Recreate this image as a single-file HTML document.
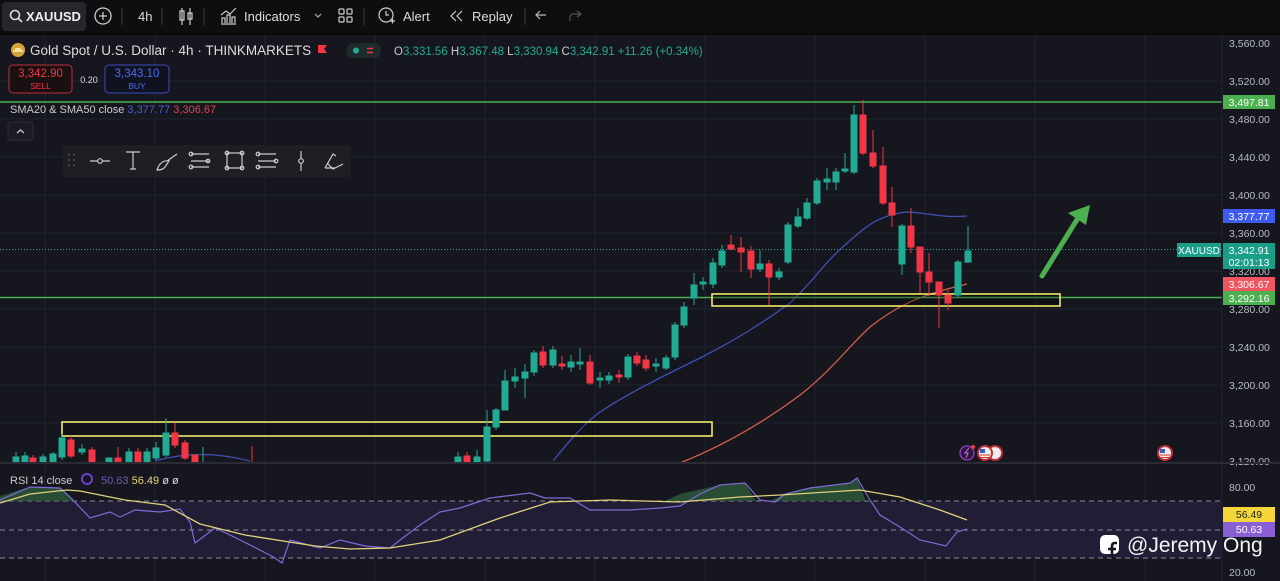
<!DOCTYPE html>
<html><head><meta charset="utf-8">
<style>
html,body{margin:0;padding:0;background:#14151c;width:1280px;height:581px;overflow:hidden;font-family:"Liberation Sans",sans-serif}
svg{display:block}
text{font-family:"Liberation Sans",sans-serif}
</style></head><body>
<svg width="1280" height="581" viewBox="0 0 1280 581" xmlns="http://www.w3.org/2000/svg">
<defs>
<clipPath id="mc"><rect x="0" y="34" width="1222" height="428"/></clipPath>
</defs>
<rect width="1280" height="581" fill="#15161e"/>
<!-- grid -->
<g stroke="#1f2130" stroke-width="1">
<line x1="0" y1="81" x2="1222" y2="81"/><line x1="0" y1="119" x2="1222" y2="119"/><line x1="0" y1="157" x2="1222" y2="157"/><line x1="0" y1="195" x2="1222" y2="195"/><line x1="0" y1="233" x2="1222" y2="233"/><line x1="0" y1="271" x2="1222" y2="271"/><line x1="0" y1="309" x2="1222" y2="309"/><line x1="0" y1="347" x2="1222" y2="347"/><line x1="0" y1="385" x2="1222" y2="385"/><line x1="0" y1="423" x2="1222" y2="423"/>
<line x1="45" y1="34" x2="45" y2="581"/><line x1="155" y1="34" x2="155" y2="581"/><line x1="265" y1="34" x2="265" y2="581"/><line x1="375" y1="34" x2="375" y2="581"/><line x1="485" y1="34" x2="485" y2="581"/><line x1="595" y1="34" x2="595" y2="581"/><line x1="705" y1="34" x2="705" y2="581"/><line x1="815" y1="34" x2="815" y2="581"/><line x1="925" y1="34" x2="925" y2="581"/><line x1="1035" y1="34" x2="1035" y2="581"/><line x1="1145" y1="34" x2="1145" y2="581"/>
</g>
<!-- top bar -->
<rect x="0" y="0" width="1280" height="33" fill="#0e0e10"/>
<rect x="2" y="2" width="84" height="29" rx="4" fill="#26272b"/>
<circle cx="15" cy="15" r="4.5" fill="none" stroke="#ddd" stroke-width="1.6"/><line x1="18" y1="18" x2="22" y2="22" stroke="#ddd" stroke-width="1.6"/>
<text x="26" y="21" fill="#eee" font-size="13" font-weight="bold">XAUUSD</text>
<circle cx="103" cy="16" r="8" fill="none" stroke="#ccc" stroke-width="1.3"/><path d="M99 16h8M103 12v8" stroke="#ccc" stroke-width="1.3"/>
<g stroke="#3a3a3e"><line x1="122" y1="8" x2="122" y2="25"/><line x1="162" y1="8" x2="162" y2="25"/><line x1="204" y1="8" x2="204" y2="25"/><line x1="364" y1="8" x2="364" y2="25"/><line x1="525" y1="8" x2="525" y2="25"/></g>
<text x="138" y="21" fill="#ddd" font-size="13">4h</text>
<path d="M182 8v17M180 11h4v9h-4zM190 8v17M188 13h4v6h-4z" stroke="#ccc" fill="none" stroke-width="1.2"/>
<path d="M221 24h15M222 23v-5h3v5M227 23v-8h3v8M232 23v-6h3v6M221 15l5-4 4 3 6-6" stroke="#ccc" fill="none" stroke-width="1.2"/>
<text x="244" y="21" fill="#ddd" font-size="13">Indicators</text>
<path d="M315 14l3 3 3-3" stroke="#aaa" fill="none" stroke-width="1.2"/>
<g fill="none" stroke="#ccc" stroke-width="1.2"><rect x="339" y="9" width="5" height="5" rx="1"/><rect x="347" y="9" width="5" height="5" rx="1"/><rect x="339" y="17" width="5" height="5" rx="1"/><rect x="347" y="17" width="5" height="5" rx="1"/></g>
<circle cx="386" cy="15" r="7" fill="none" stroke="#ccc" stroke-width="1.2"/><path d="M386 11v4h3M390 21h5M392.5 18.5v5" stroke="#ccc" fill="none" stroke-width="1.2"/>
<text x="403" y="21" fill="#ddd" font-size="13">Alert</text>
<path d="M456 11l-5 5 5 5M462 11l-5 5 5 5" stroke="#ccc" fill="none" stroke-width="1.2"/>
<text x="472" y="21" fill="#ddd" font-size="13">Replay</text>
<path d="M546 15h-9M540 11l-4 4 4 4" stroke="#bbb" fill="none" stroke-width="1.2"/>
<path d="M570 21v-4a3 3 0 013-3h7M577 11l4 3-4 3" stroke="#555" fill="none" stroke-width="1.2"/>
<rect x="0" y="33" width="1280" height="2" fill="#0a0a0c"/>

<!-- legend -->
<circle cx="18" cy="50" r="7" fill="#d6a33b"/><path d="M13 51h10M15 49h6" stroke="#fff3c0" stroke-width="1.5"/>
<text x="30" y="55" fill="#ddd" font-size="13.5">Gold Spot / U.S. Dollar · 4h · THINKMARKETS</text>
<path d="M318 45h9l-3 4 3 4h-9z" fill="#f23645"/>
<rect x="346" y="43" width="35" height="15" rx="7" fill="#1f2a2a"/><circle cx="356" cy="50.5" r="3" fill="#22ab94"/><path d="M367 48.5h6M367 52.5h6" stroke="#f23645" stroke-width="1.5"/>
<text x="394" y="55" font-size="11.5" fill="#ccc">O<tspan fill="#22ab94">3,331.56</tspan> H<tspan fill="#22ab94">3,367.48</tspan> L<tspan fill="#22ab94">3,330.94</tspan> C<tspan fill="#22ab94">3,342.91 +11.26 (+0.34%)</tspan></text>
<rect x="9" y="65" width="63" height="28" rx="4" fill="#1a1012" stroke="#c0303a"/>
<text x="40.5" y="77" fill="#f23645" font-size="11.5" text-anchor="middle">3,342.90</text><text x="40.5" y="89" fill="#f23645" font-size="8.5" text-anchor="middle">SELL</text>
<text x="89" y="83" fill="#ddd" font-size="9" text-anchor="middle">0.20</text>
<rect x="105" y="65" width="64" height="28" rx="4" fill="#10121f" stroke="#3a4bc0"/>
<text x="137" y="77" fill="#4a6cf7" font-size="11.5" text-anchor="middle">3,343.10</text><text x="137" y="89" fill="#4a6cf7" font-size="8.5" text-anchor="middle">BUY</text>
<text x="10" y="113" font-size="11" fill="#ccc">SMA20 &amp; SMA50 close <tspan fill="#4a5fd0">3,377.77</tspan> <tspan fill="#e0444f">3,306.67</tspan></text>
<rect x="8" y="122" width="25" height="18" rx="2" fill="#1a1b24" stroke="#2c2e3a"/><path d="M17 133l3.5-3 3.5 3" stroke="#ccc" fill="none" stroke-width="1.3"/>

<!-- SMAs + chart -->
<g clip-path="url(#mc)">
<path d="M155 461 Q200 448 250 461" stroke="#3f51b5" fill="none" stroke-width="1.3"/>
<path d="M553 461 C570 440 585 423 600 412 C630 392 660 378 700 358 C730 343 760 325 790 303 C810 285 825 262 845 245 C860 232 875 215 907 212 C930 213 940 218 967 216" stroke="#3f51b5" fill="none" stroke-width="1.3"/>
<path d="M680 463 C720 447 760 425 800 395 C830 372 850 345 870 327 C900 303 925 294 967 284" stroke="#d9604a" fill="none" stroke-width="1.2"/>
<line x1="0" y1="102" x2="1222" y2="102" stroke="#4caf50" stroke-width="1.5"/>
<line x1="0" y1="297.5" x2="1222" y2="297.5" stroke="#4caf50" stroke-width="1.5"/>
<line x1="0" y1="249.5" x2="1222" y2="249.5" stroke="#22ab94" stroke-width="1" stroke-dasharray="1 2"/>
<rect x="62" y="422" width="650" height="14" fill="rgba(0,0,0,0.2)" stroke="#f0ea6a" stroke-width="1.6"/>
<rect x="712" y="294" width="348" height="12" fill="rgba(0,0,0,0.25)" stroke="#f0ea6a" stroke-width="1.6"/>
<g stroke-width="1">
<!-- left cluster -->
<g stroke="#22ab94" fill="#22ab94">
<line x1="16" y1="452" x2="16" y2="462"/><rect x="13" y="457" width="6" height="5"/>
<line x1="25" y1="452" x2="25" y2="462"/><rect x="22" y="456" width="6" height="6"/>
<line x1="43" y1="454" x2="43" y2="462"/><rect x="40" y="457" width="6" height="5"/>
<line x1="53" y1="452" x2="53" y2="462"/><rect x="50" y="454" width="6" height="8"/>
<line x1="62" y1="434" x2="62" y2="460"/><rect x="59" y="438" width="6" height="19"/>
<line x1="82" y1="444" x2="82" y2="455"/><rect x="79" y="449" width="6" height="3"/>
<rect x="106" y="458" width="6" height="4"/>
<line x1="129" y1="448" x2="129" y2="462"/><rect x="126" y="452" width="6" height="10"/>
<line x1="147" y1="448" x2="147" y2="462"/><rect x="144" y="452" width="6" height="10"/>
<line x1="156" y1="442" x2="156" y2="460"/><rect x="153" y="448" width="6" height="10"/>
<line x1="166" y1="418" x2="166" y2="457"/><rect x="163" y="433" width="6" height="22"/>
<line x1="203" y1="447" x2="203" y2="462"/>
</g>
<g stroke="#f23645" fill="#f23645">
<line x1="33" y1="455" x2="33" y2="462"/><rect x="30" y="458" width="6" height="4"/>
<line x1="71" y1="436" x2="71" y2="458"/><rect x="68" y="440" width="6" height="16"/>
<line x1="92" y1="447" x2="92" y2="462"/><rect x="89" y="450" width="6" height="12"/>
<line x1="118" y1="447" x2="118" y2="462"/><rect x="115" y="458" width="6" height="4"/>
<line x1="138" y1="448" x2="138" y2="462"/><rect x="135" y="452" width="6" height="10"/>
<line x1="175" y1="423" x2="175" y2="448"/><rect x="172" y="433" width="6" height="12"/>
<line x1="185" y1="440" x2="185" y2="460"/><rect x="182" y="443" width="6" height="15"/>
<rect x="192" y="455" width="6" height="7"/>
<line x1="252" y1="446" x2="252" y2="462"/>
</g>
<!-- middle -->
<g stroke="#22ab94" fill="#22ab94">
<line x1="458" y1="452" x2="458" y2="462"/><rect x="455" y="457" width="6" height="5"/>
<line x1="477" y1="450" x2="477" y2="462"/><rect x="474" y="457" width="6" height="5"/>
<line x1="487" y1="410" x2="487" y2="462"/><rect x="484" y="427" width="6" height="34"/>
<line x1="496" y1="408" x2="496" y2="430"/><rect x="493" y="410" width="6" height="17"/>
<line x1="505" y1="370" x2="505" y2="410"/><rect x="502" y="381" width="6" height="29"/>
<line x1="515" y1="368" x2="515" y2="388"/><rect x="512" y="377" width="6" height="4"/>
<line x1="525" y1="364" x2="525" y2="398"/><rect x="522" y="372" width="6" height="6"/>
<line x1="534" y1="350" x2="534" y2="376"/><rect x="531" y="353" width="6" height="19"/>
<line x1="553" y1="346" x2="553" y2="368"/><rect x="550" y="350" width="6" height="15"/>
<line x1="571" y1="355" x2="571" y2="372"/><rect x="568" y="362" width="6" height="5"/>
<line x1="580" y1="348" x2="580" y2="370"/><rect x="577" y="362" width="6" height="2"/>
<line x1="600" y1="372" x2="600" y2="388"/><rect x="597" y="378" width="6" height="2"/>
<line x1="609" y1="372" x2="609" y2="384"/><rect x="606" y="376" width="6" height="4"/>
<line x1="628" y1="354" x2="628" y2="380"/><rect x="625" y="357" width="6" height="20"/>
<line x1="656" y1="358" x2="656" y2="372"/><rect x="653" y="364" width="6" height="2"/>
<line x1="666" y1="355" x2="666" y2="370"/><rect x="663" y="358" width="6" height="10"/>
<line x1="675" y1="322" x2="675" y2="360"/><rect x="672" y="325" width="6" height="32"/>
<line x1="684" y1="302" x2="684" y2="328"/><rect x="681" y="307" width="6" height="18"/>
<line x1="694" y1="273" x2="694" y2="305"/><rect x="691" y="285" width="6" height="13"/>
<line x1="703" y1="277" x2="703" y2="290"/><rect x="700" y="282" width="6" height="2"/>
<line x1="713" y1="258" x2="713" y2="288"/><rect x="710" y="263" width="6" height="21"/>
<line x1="722" y1="245" x2="722" y2="268"/><rect x="719" y="251" width="6" height="14"/>
<line x1="760" y1="250" x2="760" y2="272"/><rect x="757" y="264" width="6" height="5"/>
<line x1="779" y1="268" x2="779" y2="280"/><rect x="776" y="272" width="6" height="5"/>
<line x1="788" y1="222" x2="788" y2="264"/><rect x="785" y="225" width="6" height="37"/>
<line x1="798" y1="208" x2="798" y2="228"/><rect x="795" y="217" width="6" height="9"/>
<line x1="807" y1="198" x2="807" y2="220"/><rect x="804" y="203" width="6" height="15"/>
<line x1="817" y1="178" x2="817" y2="205"/><rect x="814" y="181" width="6" height="22"/>
<line x1="827" y1="168" x2="827" y2="190"/><rect x="824" y="179" width="6" height="3"/>
<line x1="836" y1="168" x2="836" y2="190"/><rect x="833" y="172" width="6" height="10"/>
<line x1="845" y1="153" x2="845" y2="173"/><rect x="842" y="169" width="6" height="2"/>
<line x1="854" y1="105" x2="854" y2="174"/><rect x="851" y="115" width="6" height="57"/>
<line x1="902" y1="224" x2="902" y2="275"/><rect x="899" y="226" width="6" height="38"/>
<line x1="958" y1="260" x2="958" y2="297"/><rect x="955" y="262" width="6" height="33"/>
<line x1="968" y1="226" x2="968" y2="263"/><rect x="965" y="251" width="6" height="11"/>
</g>
<g stroke="#f23645" fill="#f23645">
<line x1="467" y1="452" x2="467" y2="462"/><rect x="464" y="456" width="6" height="6"/>
<line x1="543" y1="346" x2="543" y2="368"/><rect x="540" y="352" width="6" height="13"/>
<line x1="562" y1="356" x2="562" y2="370"/><rect x="559" y="364" width="6" height="2"/>
<line x1="590" y1="355" x2="590" y2="385"/><rect x="587" y="362" width="6" height="21"/>
<line x1="619" y1="370" x2="619" y2="383"/><rect x="616" y="375" width="6" height="2"/>
<line x1="637" y1="352" x2="637" y2="366"/><rect x="634" y="356" width="6" height="7"/>
<line x1="646" y1="355" x2="646" y2="371"/><rect x="643" y="360" width="6" height="8"/>
<line x1="731" y1="235" x2="731" y2="250"/><rect x="728" y="245" width="6" height="4"/>
<line x1="741" y1="237" x2="741" y2="272"/><rect x="738" y="248" width="6" height="4"/>
<line x1="751" y1="246" x2="751" y2="278"/><rect x="748" y="251" width="6" height="18"/>
<line x1="769" y1="260" x2="769" y2="305"/><rect x="766" y="264" width="6" height="13"/>
<line x1="863" y1="100" x2="863" y2="155"/><rect x="860" y="115" width="6" height="38"/>
<line x1="873" y1="130" x2="873" y2="168"/><rect x="870" y="153" width="6" height="13"/>
<line x1="883" y1="147" x2="883" y2="205"/><rect x="880" y="166" width="6" height="37"/>
<line x1="892" y1="187" x2="892" y2="227"/><rect x="889" y="203" width="6" height="12"/>
<line x1="911" y1="208" x2="911" y2="253"/><rect x="908" y="226" width="6" height="21"/>
<line x1="920" y1="247" x2="920" y2="293"/><rect x="917" y="247" width="6" height="25"/>
<line x1="929" y1="253" x2="929" y2="296"/><rect x="926" y="272" width="6" height="10"/>
<line x1="939" y1="282" x2="939" y2="328"/><rect x="936" y="282" width="6" height="13"/>
<line x1="948" y1="290" x2="948" y2="310"/><rect x="945" y="295" width="6" height="8"/>
</g>
</g>
<!-- arrow -->
<path d="M1042 276 L1078 218" stroke="#4caf50" stroke-width="5" stroke-linecap="round"/>
<path d="M1090 205 L1068 213 L1086 225 Z" fill="#4caf50"/>
<!-- events -->
<circle cx="967" cy="453" r="7" fill="#2a1a35" stroke="#9c3fc8" stroke-width="1.3"/><path d="M969 448l-4 5h3l-2 5" stroke="#b05ee0" fill="none" stroke-width="1.2"/><circle cx="973" cy="447" r="2" fill="#f23645"/>
<circle cx="995" cy="453" r="7" fill="#eee" stroke="#c0303a" stroke-width="2"/>
<circle cx="985" cy="453" r="7" fill="#eee" stroke="#c0303a" stroke-width="2"/><rect x="980" y="449" width="5" height="4" fill="#3a5fc0"/><path d="M980 455h10M980 457.5h10" stroke="#d33"/>
<circle cx="1165" cy="453" r="7" fill="#eee" stroke="#c0303a" stroke-width="2"/><rect x="1160" y="449" width="5" height="4" fill="#3a5fc0"/><path d="M1160 455h10M1160 457.5h10" stroke="#d33"/>
</g>
<!-- floating toolbar -->
<rect x="63" y="145" width="288" height="32" rx="3" fill="#1e1f24"/>
<g fill="#555"><circle cx="69" cy="155" r="1"/><circle cx="74" cy="155" r="1"/><circle cx="69" cy="160" r="1"/><circle cx="74" cy="160" r="1"/><circle cx="69" cy="165" r="1"/><circle cx="74" cy="165" r="1"/></g>
<g stroke="#ccc" fill="none" stroke-width="1.2">
<path d="M90 161h20"/><circle cx="100" cy="161" r="2.3" fill="#1e1f24"/>
<path d="M126 152h14M133 152v17M130 169h6"/>
<path d="M157 170c2-6 6-10 12-9l-4 6c-2 3-6 3-8 3zM167 161l10-7"/>
<path d="M191 154h18M191 161h18M191 167h18"/><circle cx="191" cy="154" r="1.8"/><circle cx="208" cy="161" r="1.8"/><circle cx="191" cy="167" r="1.8"/>
<rect x="227" y="153" width="15" height="15"/><circle cx="227" cy="153" r="1.8"/><circle cx="242" cy="153" r="1.8"/><circle cx="227" cy="168" r="1.8"/><circle cx="242" cy="168" r="1.8"/>
<path d="M258 154h18M258 161h18M258 167h18"/><circle cx="258" cy="154" r="1.8"/><circle cx="276" cy="161" r="1.8"/><circle cx="258" cy="167" r="1.8"/>
<path d="M301 151v20"/><circle cx="301" cy="161" r="2.3" fill="#1e1f24"/>
<path d="M325 168l8-14 3 2M327 163l6 6 10-5M325 168h10"/>
</g>
<!-- price axis -->
<rect x="1222" y="35" width="58" height="546" fill="#15161e"/>
<line x1="1222" y1="35" x2="1222" y2="581" stroke="#24252e"/>
<g fill="#b8bac4" font-size="10.5">
<text x="1229" y="47">3,560.00</text><text x="1229" y="85">3,520.00</text><text x="1229" y="123">3,480.00</text><text x="1229" y="161">3,440.00</text><text x="1229" y="199">3,400.00</text><text x="1229" y="237">3,360.00</text><text x="1229" y="275">3,320.00</text><text x="1229" y="313">3,280.00</text><text x="1229" y="351">3,240.00</text><text x="1229" y="389">3,200.00</text><text x="1229" y="427">3,160.00</text><text x="1229" y="465">3,120.00</text>
<text x="1229" y="491">80.00</text><text x="1229" y="576">20.00</text>
</g>
<rect x="1223" y="95" width="52" height="14" fill="#4caf50"/><text x="1249" y="106" fill="#fff" font-size="10.5" text-anchor="middle">3,497.81</text>
<rect x="1223" y="209" width="52" height="14" fill="#3f5bef"/><text x="1249" y="220" fill="#fff" font-size="10.5" text-anchor="middle">3,377.77</text>
<rect x="1177" y="243" width="44" height="14" fill="#1a9e88"/><text x="1199" y="254" fill="#fff" font-size="10" text-anchor="middle">XAUUSD</text>
<rect x="1223" y="243" width="52" height="26" fill="#1a9e88"/><text x="1249" y="254" fill="#fff" font-size="10.5" text-anchor="middle">3,342.91</text><text x="1249" y="266" fill="#fff" font-size="10.5" text-anchor="middle">02:01:13</text>
<rect x="1223" y="277" width="52" height="14" fill="#f05560"/><text x="1249" y="288" fill="#fff" font-size="10.5" text-anchor="middle">3,306.67</text>
<rect x="1223" y="291" width="52" height="14" fill="#4caf50"/><text x="1249" y="302" fill="#fff" font-size="10.5" text-anchor="middle">3,292.16</text>
<!-- RSI pane -->
<line x1="0" y1="463" x2="1280" y2="463" stroke="#2a2b35" stroke-width="2"/>
<rect x="0" y="501" width="1222" height="57" fill="#221f38" opacity="0.85"/>
<g stroke="#8a8ca0" stroke-dasharray="5 4" stroke-width="1">
<line x1="0" y1="501" x2="1222" y2="501"/><line x1="0" y1="530" x2="1222" y2="530"/><line x1="0" y1="558" x2="1222" y2="558"/>
</g>
<path d="M0 501 L0 496 L30 487 L60 488 L70 497 L75 501 Z" fill="#2e5a3a" opacity="0.8"/>
<path d="M665 501 L680 494 L720 485 L745 483 L756 501 Z M770 501 L785 494 L810 488 L850 483 L857 478 L866 501 Z" fill="#2e5a3a" opacity="0.8"/>
<path d="M0 500 L30 487 L60 488 L70 497 L90 518 L110 512 L120 517 L135 510 L160 512 L180 509 L190 522 L195 543 L215 528 L230 535 L260 550 L275 558 L282 563 L290 540 L320 548 L340 540 L365 546 L390 548 L400 540 L420 525 L440 512 L460 508 L490 498 L530 493 L545 498 L570 498 L590 510 L630 510 L660 508 L680 506 L700 494 L720 485 L745 483 L760 500 L775 502 L785 494 L810 488 L850 483 L857 478 L870 500 L880 515 L900 527 L920 540 L946 546 L957 532 L967 529" stroke="#7e6bd8" fill="none" stroke-width="1.2"/>
<path d="M0 503 L30 494 L67 490 L80 491 L125 500 L165 505 L200 524 L245 535 L315 546 L350 549 L390 548 L440 540 L500 518 L550 502 L610 500 L680 502 L740 497 L780 495 L860 490 L900 497 L940 510 L967 520" stroke="#e0d17a" fill="none" stroke-width="1.3"/>
<text x="10" y="484" fill="#ccc" font-size="11">RSI 14 close</text>
<circle cx="87" cy="479" r="5" fill="none" stroke="#6a3fd0" stroke-width="2"/>
<text x="101" y="484" font-size="11" fill="#6a5fb0">50.63 <tspan fill="#e8d47a">56.49</tspan> <tspan fill="#ddd">ø ø</tspan></text>
<rect x="1223" y="507" width="52" height="15" fill="#f5d63a"/><text x="1249" y="518" fill="#222" font-size="10.5" text-anchor="middle">56.49</text>
<rect x="1223" y="522" width="52" height="15" fill="#8a5fd6"/><text x="1249" y="533" fill="#fff" font-size="10.5" text-anchor="middle">50.63</text>
<!-- watermark -->
<rect x="1100" y="535" width="19" height="19" rx="5" fill="#fff"/><path d="M1112 558v-12c0-2 1-3 3-3h2M1108 549h8" stroke="#15161e" stroke-width="2.6" fill="none"/>
<text x="1127" y="552" fill="#f4f4f4" font-size="21">@Jeremy Ong</text>
</svg>
</body></html>
